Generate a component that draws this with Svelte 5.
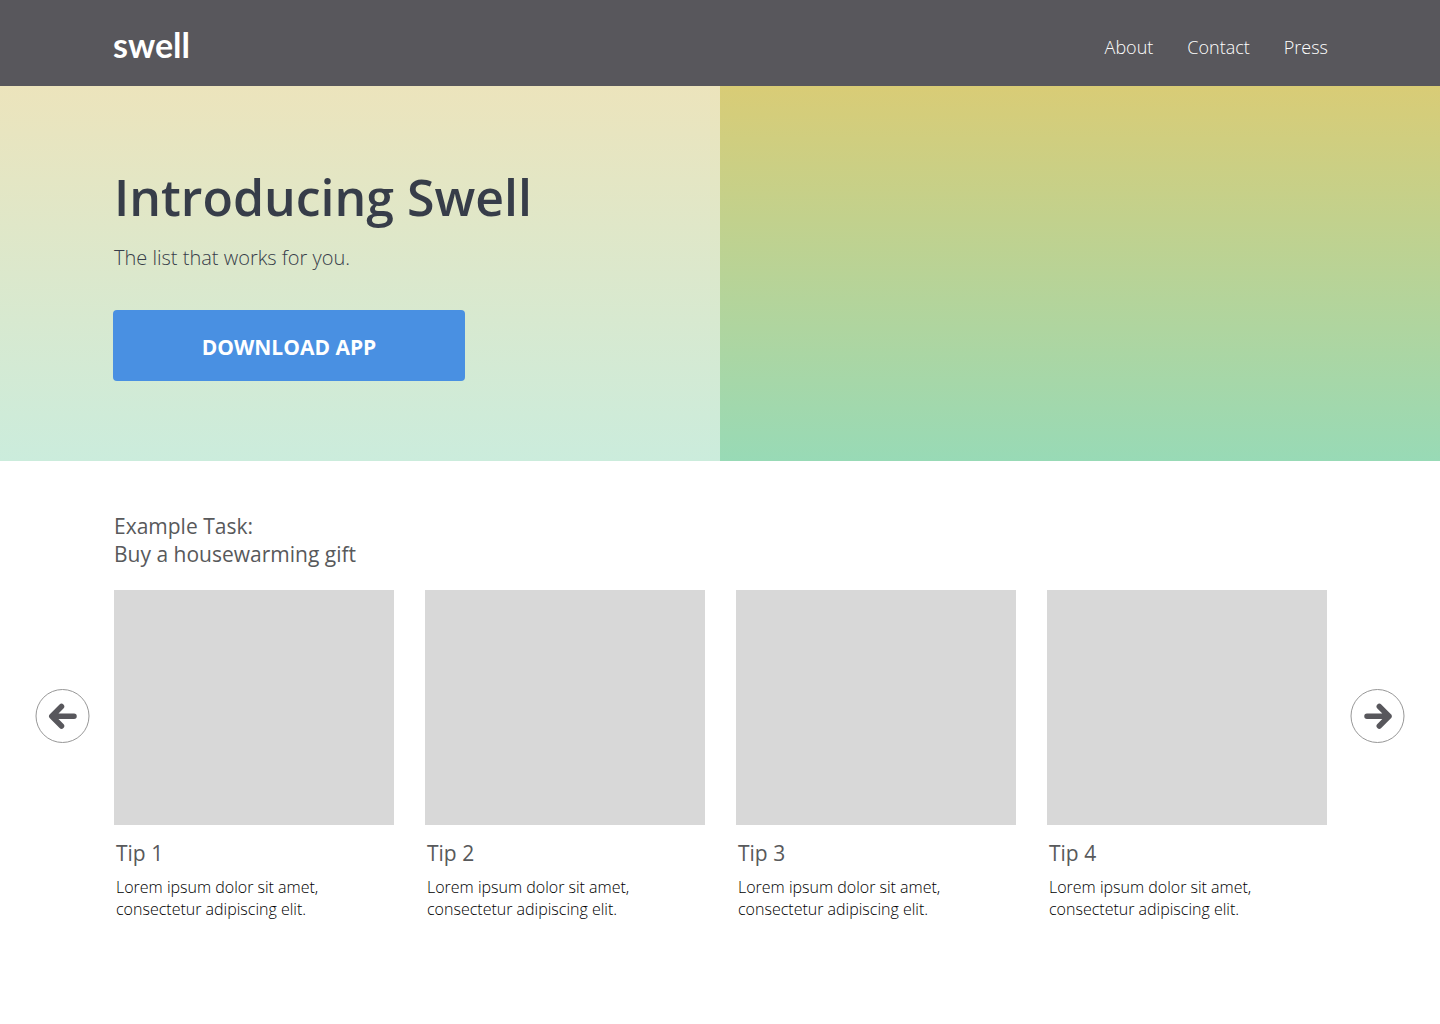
<script>
  const links = ['About', 'Contact', 'Press'];
  const tips = [1, 2, 3, 4].map((n) => ({
    title: `Tip ${n}`,
    text: 'Lorem ipsum dolor sit amet, consectetur adipiscing elit.'
  }));
</script>

<header class="bar">
  <a class="logo" href="#home">swell</a>
  <nav>
    {#each links as link}
      <a href="#{link.toLowerCase()}">{link}</a>
    {/each}
  </nav>
</header>

<main>
  <section class="hero">
    <div class="intro">
      <h1>Introducing Swell</h1>
      <p>The list that works for you.</p>
      <button class="download" type="button">DOWNLOAD APP</button>
    </div>
    <div class="art"></div>
  </section>

  <section class="example">
    <h2>Example Task:<br />Buy a housewarming gift</h2>
    <div class="carousel">
      <button class="arrow" type="button" aria-label="Previous tips">
        <svg viewBox="0 0 54 54" aria-hidden="true">
          <circle cx="26.5" cy="27" r="26.5" />
          <path d="M38 27.300H16M25.500 17.500L15.800 27.300L25.500 37" />
        </svg>
      </button>
      <ul class="tips">
        {#each tips as tip}
          <li>
            <div class="picture"></div>
            <h3>{tip.title}</h3>
            <p>{tip.text}</p>
          </li>
        {/each}
      </ul>
      <button class="arrow" type="button" aria-label="Next tips">
        <svg viewBox="0 0 54 54" aria-hidden="true">
          <circle cx="26.5" cy="27" r="26.5" />
          <path d="M16 27.300H38M28.300 17.500L38 27.300L28.300 37" />
        </svg>
      </button>
    </div>
  </section>
</main>

<style>
  :global(body) {
    background: #fff;
    color: #000;
    font-family: 'Open Sans', sans-serif;
  }

  h1,
  h2,
  h3,
  p,
  ul {
    margin: 0;
    padding: 0;
  }

  a {
    color: #fff;
    text-decoration: none;
  }

  button {
    padding: 0;
    border: 0;
    font-family: inherit;
    cursor: pointer;
  }

  .bar {
    display: flex;
    justify-content: space-between;
    align-items: center;
    box-sizing: border-box;
    min-height: 86px;
    padding: 4px 112px 0 113px;
    background: #58575c;
  }

  .logo {
    font-family: Lato, sans-serif;
    font-weight: 700;
    font-size: 34px;
    line-height: 48px;
  }

  nav {
    display: flex;
    gap: 34px;
    padding-top: 4px;
    font-weight: 300;
    font-size: 18px;
    line-height: 24px;
  }

  .hero {
    display: grid;
    grid-template-columns: 1fr 1fr;
  }

  .intro {
    padding: 76px 24px 80px 113px;
    background: linear-gradient(#ece4bc, #cbecdc);
    color: #373d49;
  }

  .art {
    background: linear-gradient(#d9cc76, #98dab6);
  }

  h1 {
    padding-left: 1px;
    font-weight: 600;
    font-size: 50px;
    line-height: 70px;
  }

  .intro p {
    margin-top: 10px;
    padding-left: 1px;
    font-weight: 300;
    font-size: 20px;
    line-height: 32px;
  }

  .download {
    display: block;
    width: 100%;
    max-width: 352px;
    margin-top: 36px;
    padding: 23px 0 20px;
    border-radius: 4px;
    background: #4990e2;
    color: #fff;
    font-weight: 700;
    font-size: 21px;
    line-height: 28px;
  }

  h2,
  h3 {
    color: #58595b;
    font-weight: 400;
    font-size: 21px;
    line-height: 28px;
  }

  .example {
    padding: 51px 35px 0 36px;
  }

  h2 {
    padding: 0 78px;
  }

  .carousel {
    display: flex;
    align-items: flex-start;
    gap: 24px;
    margin-top: 22px;
  }

  .arrow {
    flex: none;
    width: 54px;
    height: 54px;
    margin-top: 99px;
    background: none;
  }

  .arrow svg {
    display: block;
    overflow: visible;
    fill: none;
    stroke: #58575c;
  }

  .arrow circle {
    stroke: #979797;
  }

  .arrow path {
    stroke-width: 5.5;
    stroke-linecap: round;
    stroke-linejoin: round;
  }

  .tips {
    flex: 1;
    display: grid;
    grid-template-columns: repeat(4, 1fr);
    gap: 31px;
    list-style: none;
  }

  .picture {
    height: 235px;
    background: #d8d8d8;
  }

  h3 {
    margin-top: 14px;
    padding-left: 2px;
  }

  li p {
    max-width: 224px;
    margin-top: 9px;
    padding-left: 2px;
    font-weight: 300;
    font-size: 16px;
    line-height: 22px;
  }
</style>
